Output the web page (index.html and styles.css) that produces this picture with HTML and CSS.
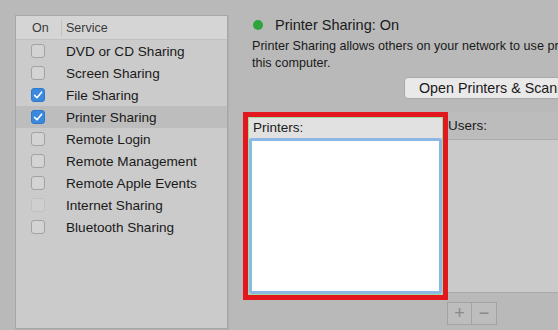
FILE: index.html
```html
<!DOCTYPE html>
<html>
<head>
<meta charset="utf-8">
<link rel="stylesheet" href="styles.css">
</head>
<body>
<div class="page">
  <div class="services">
    <div class="thead">
      <div class="col-on">On</div>
      <div class="col-sep"></div>
      <div class="col-service">Service</div>
    </div>
    <div class="row"><span class="cb"></span><span class="label">DVD or CD Sharing</span></div>
    <div class="row"><span class="cb"></span><span class="label">Screen Sharing</span></div>
    <div class="row"><span class="cb checked"><svg viewBox="0 0 14 14" width="14" height="14"><path d="M3.6 7.4 L6 9.8 L10.6 4.2" fill="none" stroke="#fff" stroke-width="1.6" stroke-linecap="round" stroke-linejoin="round"/></svg></span><span class="label">File Sharing</span></div>
    <div class="row selected"><span class="cb checked"><svg viewBox="0 0 14 14" width="14" height="14"><path d="M3.6 7.4 L6 9.8 L10.6 4.2" fill="none" stroke="#fff" stroke-width="1.6" stroke-linecap="round" stroke-linejoin="round"/></svg></span><span class="label">Printer Sharing</span></div>
    <div class="row"><span class="cb"></span><span class="label">Remote Login</span></div>
    <div class="row"><span class="cb"></span><span class="label">Remote Management</span></div>
    <div class="row"><span class="cb"></span><span class="label">Remote Apple Events</span></div>
    <div class="row"><span class="cb disabled"></span><span class="label">Internet Sharing</span></div>
    <div class="row"><span class="cb"></span><span class="label">Bluetooth Sharing</span></div>
  </div>

  <div class="detail">
    <div class="status"><span class="dot"></span><span class="status-text">Printer Sharing: On</span></div>
    <div class="desc">Printer Sharing allows others on your network to use printers connected to<br>this computer.</div>
    <div class="btn-row"><div class="btn">Open Printers &amp; Scanners…</div></div>
    <div class="tables">
      <div class="printers">
        <div class="printers-inner">
          <div class="ph">Printers:</div>
          <div class="plist"></div>
        </div>
      </div>
      <div class="users">
        <div class="uh">Users:</div>
        <div class="ulist"></div>
      </div>
      <div class="highlight"></div>
    </div>
    <div class="pm">
      <div class="pm-btn">+</div>
      <div class="pm-btn">−</div>
    </div>
  </div>
</div>
</body>
</html>
```

FILE: styles.css
```css
html, body {
  margin: 0;
  padding: 0;
  background: #b9b9b9;
}
.page {
  width: 558px;
  height: 330px;
  overflow: hidden;
  display: flex;
  align-items: flex-start;
  padding: 15px 0 0 15px;
  box-sizing: border-box;
  font-family: "Liberation Sans", Arial, sans-serif;
  color: #1a1a1a;
}
.services {
  width: 213px;
  height: 314px;
  flex: none;
  box-sizing: border-box;
  border: 1px solid #a7a7a7;
  background: #cbcbcb;
  box-shadow: 1px 1px 0 #afafaf;
}
.thead {
  height: 24px;
  box-sizing: border-box;
  background: #d5d5d5;
  border-bottom: 1px solid #c0c0c0;
  display: flex;
  align-items: center;
  font-size: 12.5px;
  color: #3a3a3a;
}
.col-on {
  padding-left: 16px;
  box-sizing: border-box;
  width: 45px;
}
.col-sep {
  width: 1px;
  height: 16px;
  background: #c2c2c2;
  margin-right: 4px;
}
.row {
  height: 22px;
  display: flex;
  align-items: center;
  font-size: 13.6px;
}
.row.selected {
  background: #bdbdbd;
}
.cb {
  width: 14px;
  height: 14px;
  box-sizing: border-box;
  border: 1px solid #a2a2a2;
  border-radius: 3px;
  background: #d3d3d3;
  margin-left: 15px;
  margin-right: 21px;
  flex: none;
  display: flex;
}
.cb.checked {
  background: #3b88df;
  border-color: #3078cc;
}
.cb.checked svg {
  margin: -1px;
}
.cb.disabled {
  border-color: #c0c0c0;
  background: #cfcfcf;
}
.detail {
  margin-left: 15px;
  width: 320px;
  flex: none;
}
.status {
  height: 20px;
  display: flex;
  align-items: center;
}
.dot {
  width: 10px;
  height: 10px;
  border-radius: 50%;
  background: #2ea43c;
  margin-left: 10px;
  margin-right: 12px;
}
.status-text {
  font-size: 14.5px;
}
.desc {
  margin-top: 3px;
  padding-left: 9px;
  font-size: 12.6px;
  line-height: 17px;
  white-space: nowrap;
}
.btn-row {
  margin-top: 5px;
  padding-left: 161px;
}
.btn {
  height: 22px;
  box-sizing: border-box;
  border: 1px solid #a9a9a9;
  border-radius: 4px;
  background: #e9e9e9;
  font-size: 14.3px;
  line-height: 20px;
  padding-left: 14px;
  white-space: nowrap;
  width: 200px;
}
.tables {
  margin-top: 13px;
  display: flex;
  align-items: flex-start;
  position: relative;
}
.printers {
  width: 205px;
  height: 188px;
  padding: 5px;
  box-sizing: border-box;
  flex: none;
}
.printers-inner {
  height: 100%;
  box-sizing: border-box;
  border: 1px solid #9fdc9a;
  background: #e1e1e1;
  display: flex;
  flex-direction: column;
}
.ph {
  height: 20px;
  font-size: 13.5px;
  line-height: 20px;
  padding-left: 4px;
}
.plist {
  flex: 1;
  background: #fff;
  border: 3px solid #8db8e6;
  border-radius: 2px;
}
.users {
  flex: 1;
  height: 180px;
  display: flex;
  flex-direction: column;
  border-bottom: 1px solid #a9a9a9;
}
.uh {
  height: 28px;
  box-sizing: border-box;
  background: #bcbcbc;
  border-bottom: 1px solid #acacac;
  font-size: 13.5px;
  line-height: 28px;
}
.ulist {
  flex: 1;
  background: #cacaca;
}
.highlight {
  position: absolute;
  left: 0;
  top: 0;
  width: 205px;
  height: 188px;
  box-sizing: border-box;
  border: 5px solid #e3171e;
}
.pm {
  margin-top: 2px;
  margin-left: 204px;
  display: flex;
}
.pm-btn {
  width: 25px;
  height: 23px;
  box-sizing: border-box;
  border: 1px solid #a3a3a3;
  background: #bdbdbd;
  color: #8a8a8a;
  font-size: 18px;
  line-height: 20px;
  text-align: center;
}
.pm-btn + .pm-btn {
  border-left: none;
}
```
